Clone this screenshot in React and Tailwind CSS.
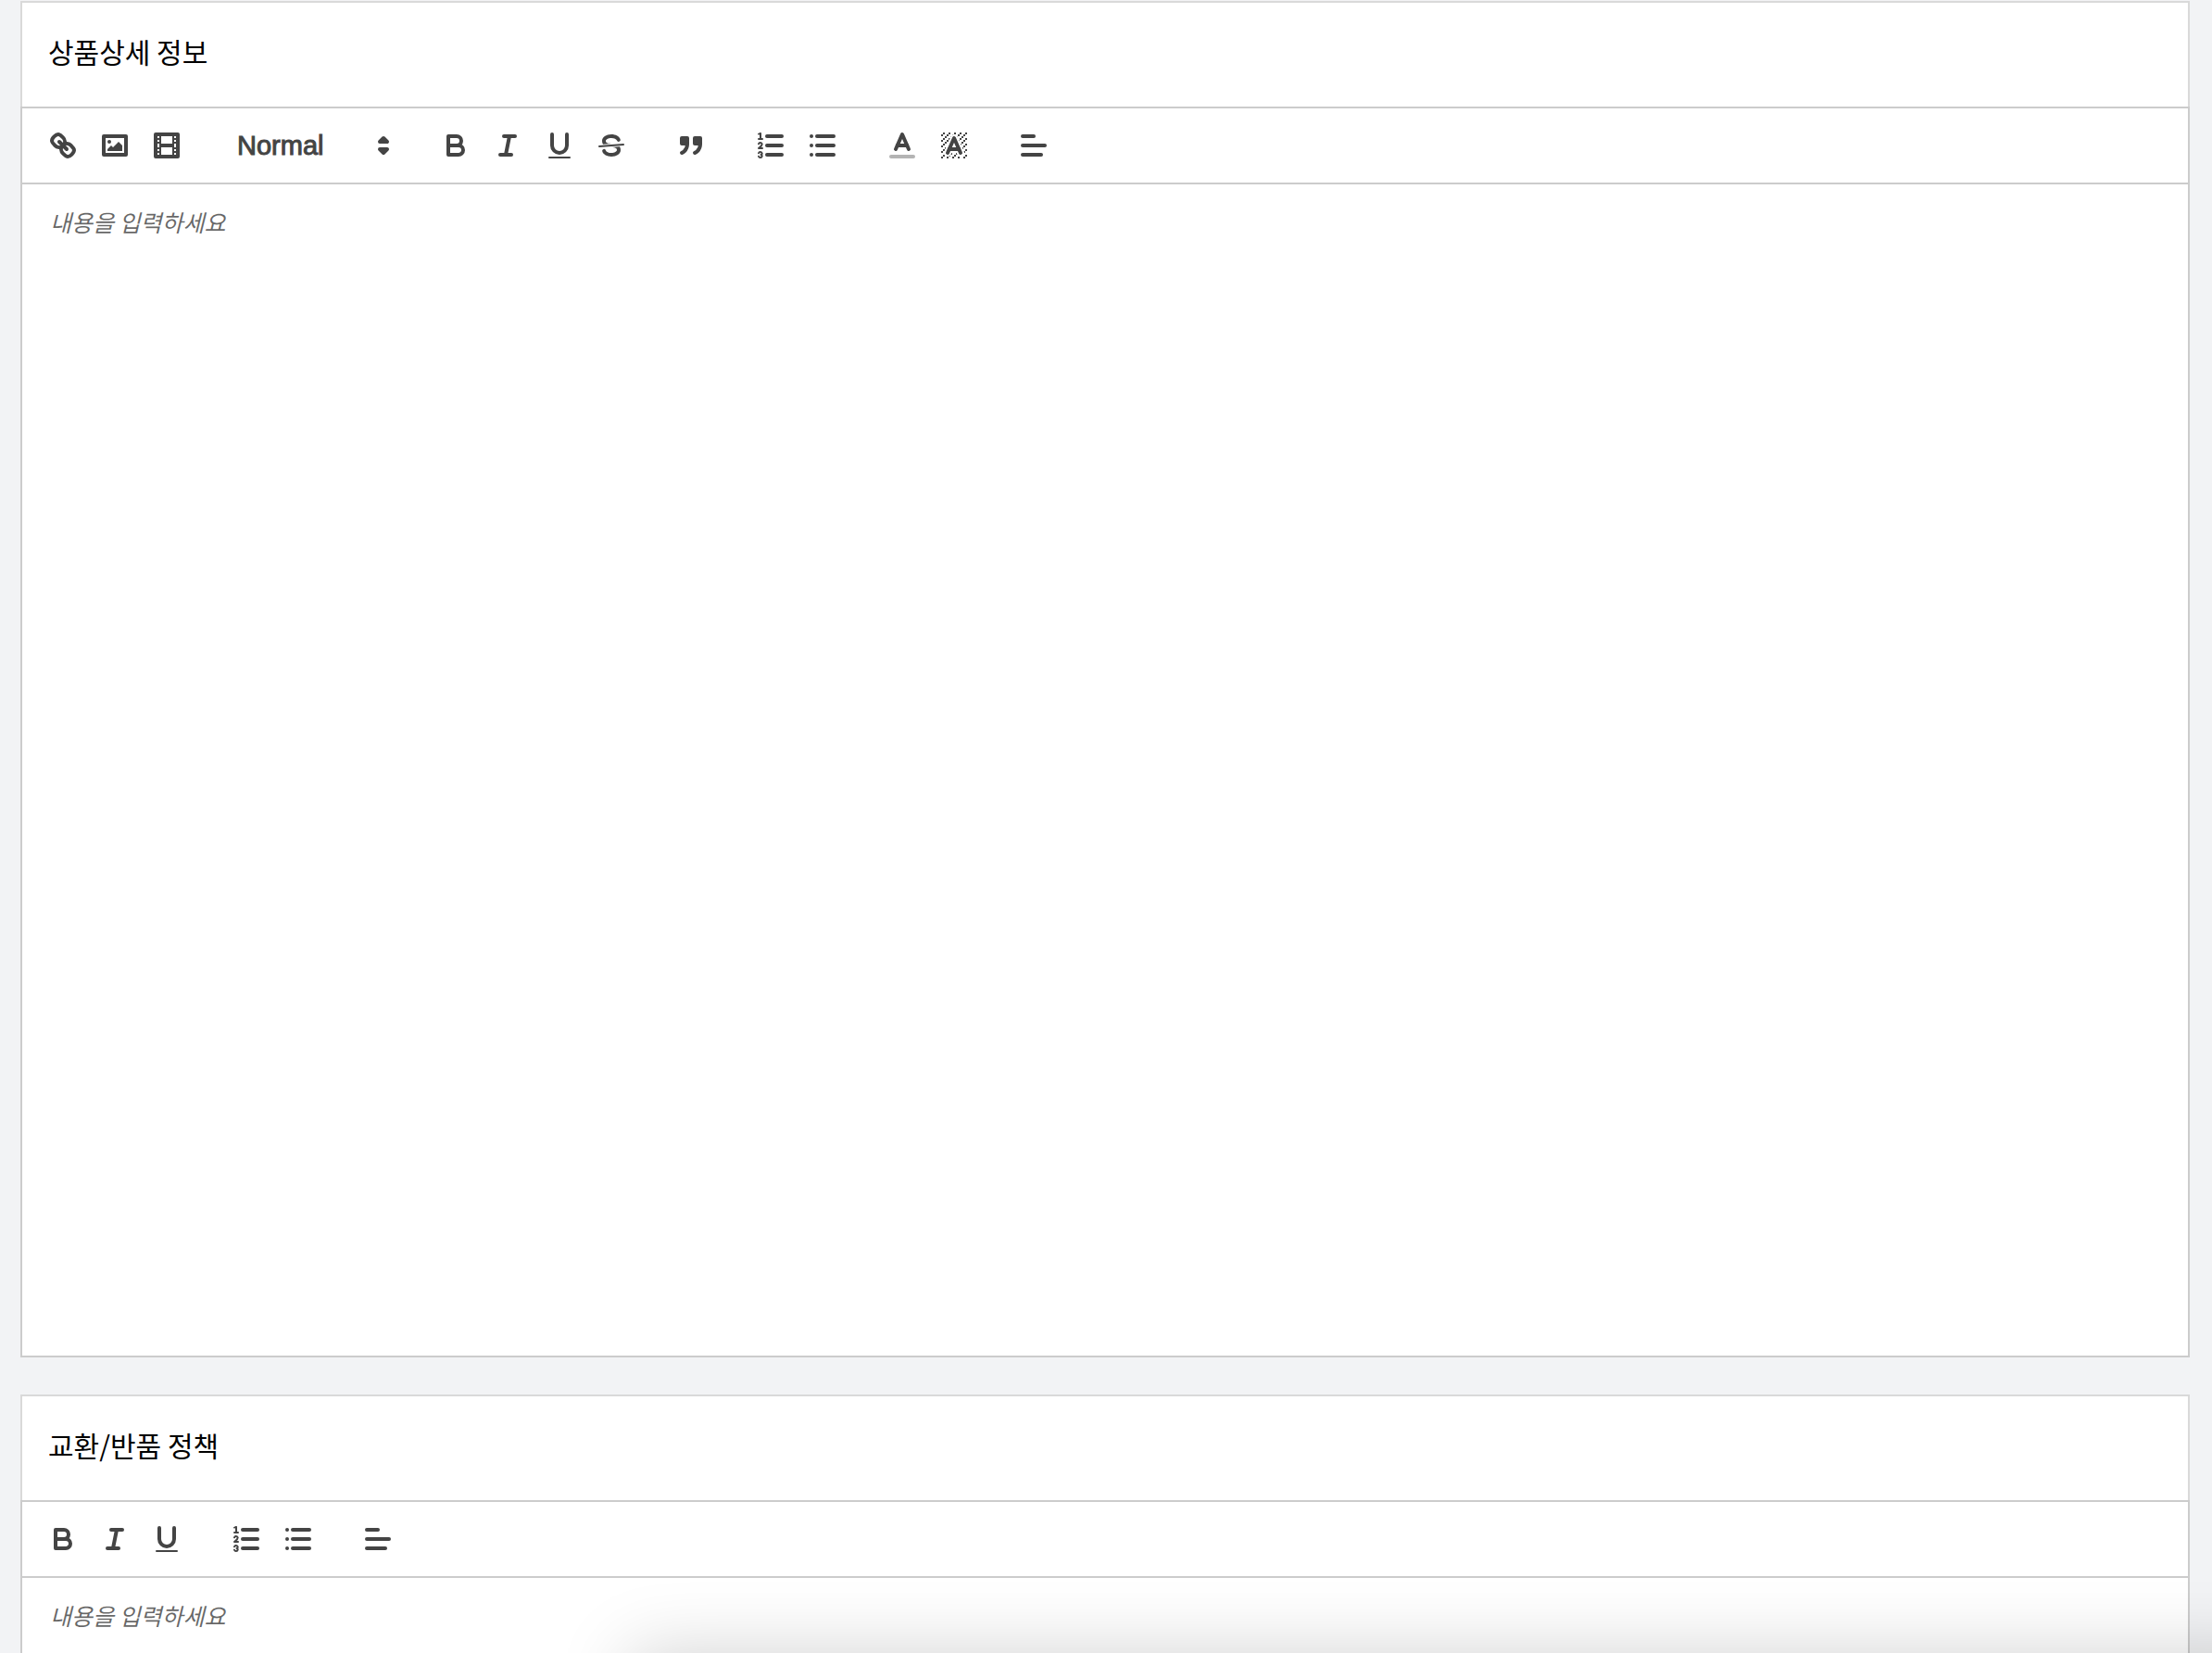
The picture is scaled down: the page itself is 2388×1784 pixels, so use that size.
import React from "react";

function Icon({ children }) {
  return (
    <svg viewBox="0 0 18 18" className="size-9" fill="none" aria-hidden="true">
      {children}
    </svg>
  );
}

const stroke = {
  stroke: "#444",
  strokeWidth: 2,
  strokeLinecap: "round",
  strokeLinejoin: "round",
};
const thin = { ...stroke, strokeWidth: 1 };

const LinkIcon = () => (
  <Icon>
    <g {...stroke}>
      <line x1="7" x2="11" y1="7" y2="11" />
      <path d="M8.9,4.577a3.476,3.476,0,0,1,.36,4.679A3.476,3.476,0,0,1,4.577,8.9C3.185,7.5,2.035,6.4,4.217,4.217S7.5,3.185,8.9,4.577Z" />
      <path d="M13.423,9.1a3.476,3.476,0,0,0-4.679-.36,3.476,3.476,0,0,0,.36,4.679c1.392,1.392,2.5,2.542,4.679.36S14.815,10.5,13.423,9.1Z" />
    </g>
  </Icon>
);

const ImageIcon = () => (
  <Icon>
    <rect {...stroke} height="10" width="12" x="3" y="4" />
    <circle fill="#444" cx="6" cy="7" r="1" />
    <polyline fill="#444" points="5 12 5 11 7 9 8 10 11 7 13 9 13 12 5 12" />
  </Icon>
);

const VideoIcon = () => (
  <Icon>
    <rect {...stroke} height="12" width="12" x="3" y="3" />
    <g fill="#444">
      <rect height="12" width="1" x="5" y="3" />
      <rect height="12" width="1" x="12" y="3" />
      <rect height="2" width="8" x="5" y="8" />
      {[5, 7, 10, 12].map((y) => (
        <React.Fragment key={y}>
          <rect height="1" width="3" x="3" y={y} />
          <rect height="1" width="3" x="12" y={y} />
        </React.Fragment>
      ))}
    </g>
  </Icon>
);

const BoldIcon = () => (
  <Icon>
    <g {...stroke}>
      <path d="M5,4H9.5A2.5,2.5,0,0,1,12,6.5v0A2.5,2.5,0,0,1,9.5,9H5Z" />
      <path d="M5,9h5.5A2.5,2.5,0,0,1,13,11.5v0A2.5,2.5,0,0,1,10.5,14H5Z" />
    </g>
  </Icon>
);

const ItalicIcon = () => (
  <Icon>
    <g {...stroke}>
      <line x1="7" x2="13" y1="4" y2="4" />
      <line x1="5" x2="11" y1="14" y2="14" />
      <line x1="8" x2="10" y1="14" y2="4" />
    </g>
  </Icon>
);

const UnderlineIcon = () => (
  <Icon>
    <path {...stroke} d="M5,3V9a4.012,4.012,0,0,0,4,4H9a4.012,4.012,0,0,0,4-4V3" />
    <rect fill="#444" height="1" rx="0.5" ry="0.5" width="12" x="3" y="15" />
  </Icon>
);

const StrikeIcon = () => (
  <Icon>
    <line {...thin} x1="15.5" x2="2.5" y1="8.5" y2="9.5" />
    <g fill="#444">
      <path d="M9.007,8C6.542,7.791,6,7.519,6,6.5,6,5.792,7.283,5,9,5c1.571,0,2.765.679,2.969,1.309a1,1,0,0,0,1.9-.617C13.356,4.106,11.354,3,9,3,6.2,3,4,4.538,4,6.5a3.2,3.2,0,0,0,.5,1.843Z" />
      <path d="M8.984,10C11.457,10.208,12,10.479,12,11.5c0,0.708-1.283,1.5-3,1.5-1.571,0-2.765-.679-2.969-1.309a1,1,0,1,0-1.9.617C4.644,13.894,6.646,15,9,15c2.8,0,5-1.538,5-3.5a3.2,3.2,0,0,0-.5-1.843Z" />
    </g>
  </Icon>
);

const QuoteIcon = () => (
  <Icon>
    <g {...stroke} fill="#444">
      <rect height="3" width="3" x="4" y="5" />
      <rect height="3" width="3" x="11" y="5" />
      <path d="M7,8c0,4.031-3,5-3,5" />
      <path d="M14,8c0,4.031-3,5-3,5" />
    </g>
  </Icon>
);

const OrderedIcon = () => (
  <Icon>
    <g {...stroke}>
      <line x1="7" x2="15" y1="4" y2="4" />
      <line x1="7" x2="15" y1="9" y2="9" />
      <line x1="7" x2="15" y1="14" y2="14" />
    </g>
    <g {...thin}>
      <line x1="2.5" x2="4.5" y1="5.5" y2="5.5" />
      <path d="M4.5,10.5h-2c0-.234,1.85-1.076,1.85-2.234A0.959,0.959,0,0,0,2.5,8.156" />
      <path d="M2.5,14.846a0.959,0.959,0,0,0,1.85-.109A0.7,0.7,0,0,0,3.75,14a0.688,0.688,0,0,0,.6-0.736,0.959,0.959,0,0,0-1.85-.109" />
    </g>
    <path
      fill="#444"
      d="M3.5,6A0.5,0.5,0,0,1,3,5.5V3.085l-0.276.138A0.5,0.5,0,0,1,2.053,3c-0.124-.247-0.023-0.324.224-0.447l1-.5A0.5,0.5,0,0,1,4,2.5v3A0.5,0.5,0,0,1,3.5,6Z"
    />
  </Icon>
);

const BulletIcon = () => (
  <Icon>
    <g {...stroke}>
      {[4, 9, 14].map((y) => (
        <React.Fragment key={y}>
          <line x1="6" x2="15" y1={y} y2={y} />
          <line x1="3" x2="3" y1={y} y2={y} />
        </React.Fragment>
      ))}
    </g>
  </Icon>
);

const ColorIcon = () => (
  <Icon>
    <line {...stroke} strokeOpacity="0.4" x1="3" x2="15" y1="15" y2="15" />
    <polyline {...stroke} points="5.5 11 9 3 12.5 11" />
    <line {...stroke} x1="11.63" x2="6.38" y1="9" y2="9" />
  </Icon>
);

const hatchCells = [
  [4, 4], [2, 6], [3, 5], [4, 7], [2, 12], [2, 9], [2, 15], [3, 8], [12, 2], [11, 3],
  [2, 3], [6, 2], [3, 2], [5, 3], [9, 2], [15, 14], [13, 7], [15, 5], [14, 6], [15, 8],
  [14, 9], [14, 3], [15, 2], [12, 5], [13, 4], [9, 14], [8, 15], [5, 15], [11, 15],
  [14, 15], [15, 11],
];

const BackgroundIcon = () => (
  <Icon>
    <g fill="#444">
      {hatchCells.map(([x, y]) => (
        <rect key={`${x}-${y}`} height="1" width="1" x={x} y={y} />
      ))}
      <polygon points="6 6.868 6 6 5 6 5 7 5.942 7 6 6.868" />
      <polygon points="6.817 5 6 5 6 6 6.38 6 6.817 5" />
      <polygon points="4 11.439 4 11 3 11 3 12 3.755 12 4 11.439" />
      <polygon points="4.63 10 4 10 4 11 4.192 11 4.63 10" />
      <path d="M10.832,4.2L11,4.582V4H10.708A1.948,1.948,0,0,1,10.832,4.2Z" />
      <path d="M7,4.582L7.168,4.2A1.929,1.929,0,0,1,7.292,4H7V4.582Z" />
      <path d="M8,13H7.683l-0.351.8a1.933,1.933,0,0,1-.124.2H8V13Z" />
      <path d="M9,3H8V3.282A1.985,1.985,0,0,1,9,3Z" />
      <polygon points="13.447 10.174 13.469 10.225 13.472 10.232 13.808 11 14 11 14 10 13.37 10 13.447 10.174" />
      <path d="M3.775,14H3v1H4V14.314A1.97,1.97,0,0,1,3.775,14Z" />
      <polygon points="12 6.868 12 6 11.62 6 12 6.868" />
      <polygon points="12.933 9 13 9 13 8 12.495 8 12.933 9" />
      <path d="M6,14.926V15H7V14.316A1.993,1.993,0,0,1,6,14.926Z" />
      <path d="M10.668,13.8L10.317,13H10v1h0.792A1.947,1.947,0,0,1,10.668,13.8Z" />
      <path d="M14.332,12.2a1.99,1.99,0,0,1,.166.8H15V12H14.245Z" />
    </g>
    <polyline {...stroke} points="5.5 13 9 5 12.5 13" />
    <line {...stroke} x1="11.63" x2="6.38" y1="11" y2="11" />
  </Icon>
);

const AlignIcon = () => (
  <Icon>
    <g {...stroke}>
      <line x1="3" x2="9" y1="4" y2="4" />
      <line x1="3" x2="15" y1="9" y2="9" />
      <line x1="3" x2="13" y1="14" y2="14" />
    </g>
  </Icon>
);

const PickerArrows = () => (
  <Icon>
    <g {...stroke}>
      <polygon points="7 11 9 13 11 11 7 11" />
      <polygon points="7 7 9 5 11 7 7 7" />
    </g>
  </Icon>
);

const tools = {
  link: ["링크", LinkIcon],
  image: ["이미지", ImageIcon],
  video: ["동영상", VideoIcon],
  bold: ["굵게", BoldIcon],
  italic: ["기울임", ItalicIcon],
  underline: ["밑줄", UnderlineIcon],
  strike: ["취소선", StrikeIcon],
  quote: ["인용", QuoteIcon],
  ordered: ["번호 목록", OrderedIcon],
  bullet: ["글머리 목록", BulletIcon],
  color: ["글자색", ColorIcon],
  background: ["배경색", BackgroundIcon],
  align: ["정렬", AlignIcon],
};

function HeadingPicker() {
  return (
    <div className="relative h-12 w-[196px]">
      <select
        aria-label="문단 스타일"
        defaultValue="Normal"
        className="h-12 w-full appearance-none bg-transparent pr-10 pl-[18px] font-['Liberation_Sans',Arial,sans-serif] text-[29px] leading-[48px] text-[#444] [-webkit-text-stroke:1px_#444]"
      >
        <option>Normal</option>
        <option>Heading 1</option>
        <option>Heading 2</option>
      </select>
      <span className="pointer-events-none absolute top-1.5 right-0.5">
        <PickerArrows />
      </span>
    </div>
  );
}

function Toolbar({ groups }) {
  return (
    <div
      role="toolbar"
      className="flex flex-wrap gap-x-[30px] border-2 border-[#ccc] p-4"
    >
      {groups.map((group, i) => (
        <div key={i} className="flex">
          {group.map((name) => {
            if (name === "heading") return <HeadingPicker key={name} />;
            const [label, Glyph] = tools[name];
            return (
              <button
                key={name}
                type="button"
                aria-label={label}
                className="flex h-12 w-14 items-center justify-center"
              >
                <Glyph />
              </button>
            );
          })}
        </div>
      ))}
    </div>
  );
}

function EditorCard({ title, groups, editorClass }) {
  return (
    <section className="bg-white">
      <h2 className="border-2 border-b-0 border-[#d9d9d9] px-7 pt-8 pb-10 text-[30px] leading-10 text-black">
        {title}
      </h2>
      <Toolbar groups={groups} />
      <textarea
        aria-label={title}
        placeholder="내용을 입력하세요"
        className={`block w-full resize-none border-2 border-t-0 border-[#ccc] px-[30px] py-[22px] text-[25px] leading-9 outline-none placeholder:text-black/60 placeholder:italic ${editorClass}`}
      />
    </section>
  );
}

export default function App() {
  return (
    <main className="relative flex h-screen flex-col gap-10 overflow-hidden bg-[#f2f3f5] pt-px pr-6 pl-[22px] font-['Noto_Sans_CJK_KR',sans-serif]">
      <EditorCard
        title="상품상세 정보"
        editorClass="h-[1266px]"
        groups={[
          ["link", "image", "video"],
          ["heading"],
          ["bold", "italic", "underline", "strike"],
          ["quote"],
          ["ordered", "bullet"],
          ["color", "background"],
          ["align"],
        ]}
      />
      <EditorCard
        title="교환/반품 정책"
        editorClass="h-[600px]"
        groups={[["bold", "italic", "underline"], ["ordered", "bullet"], ["align"]]}
      />
      <div className="pointer-events-none absolute top-full -right-20 left-[680px] h-40 shadow-[0_0_80px_rgba(0,0,0,0.18)]" />
    </main>
  );
}
